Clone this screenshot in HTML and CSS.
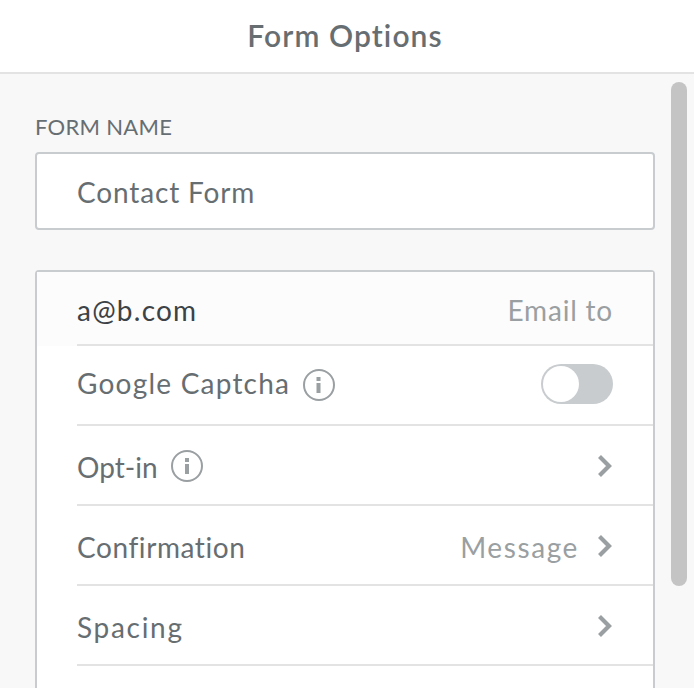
FILE: index.html
```html
<!DOCTYPE html>
<html>
	<head>
		<meta charset="UTF-8">
		<title>Form Options</title>
		<link rel="stylesheet" href="styles.css">
	</head>
	<body>
		<div class="panel">
			<div class="header"><h1>Form Options</h1></div>
			<div class="content">
				<div class="label"><span>FORM NAME</span></div>
				<div class="field"><span>Contact Form</span></div>
				<ul class="list">
					<li class="email">
						<span class="name mail">a@b.com</span>
						<span class="value to">Email to</span>
					</li>
					<li class="captcha">
						<span class="name google">Google Captcha</span>
						<svg class="info" viewBox="0 0 32 32"><circle cx="16" cy="16" r="15"/><path d="M13.5 8h4v4h-4zM13.5 14h4v10h-4z"/></svg>
						<div class="toggle"><i></i></div>
					</li>
					<li>
						<span class="name optin">Opt-in</span>
						<svg class="info" viewBox="0 0 32 32"><circle cx="16" cy="16" r="15"/><path d="M14 8h4v4h-4zM14 14h4v10h-4z"/></svg>
						<svg class="arrow" viewBox="0 0 14 22"><path d="M1.5 1.5L11 11L1.5 20.5"/></svg>
					</li>
					<li>
						<span class="name confirm">Confirmation</span>
						<span class="value message">Message</span>
						<svg class="arrow" viewBox="0 0 14 22"><path d="M1.5 1.5L11 11L1.5 20.5"/></svg>
					</li>
					<li>
						<span class="name spacing">Spacing</span>
						<svg class="arrow" viewBox="0 0 14 22"><path d="M1.5 1.5L11 11L1.5 20.5"/></svg>
					</li>
					<li></li>
				</ul>
			</div>
			<div class="scrollbar"></div>
		</div>
	</body>
</html>
```
FILE: styles.css
```css
*{
	padding:0;
	margin:0;
	box-sizing: border-box;
}
ul,li{
	list-style: none;
}
body{
	font-family: Lato, "Liberation Sans", sans-serif;
	font-size:28px;
	line-height:34px;
	color:#676e72;
	background: #f8f8f8;
	overflow: hidden;
}
.panel{
	height:688px;
	overflow: hidden;
	position: relative;
}
.header{
	height:74px;
	padding:18px 4px 0 0;
	background: #fff;
	border-bottom:2px solid #e3e3e3;
	text-align: center;
}
.header h1{
	font-size:30px;
	line-height:34px;
	font-weight:600;
	letter-spacing:1.1px;
}
.content{
	padding:39px 39px 0 35px;
}
.label{
	height:39px;
	font-size:22px;
	line-height:28px;
	letter-spacing:.3px;
}
.field{
	height:78px;
	padding:21px 40px 0;
	background: #fff;
	border:2px solid #c8cccf;
	border-radius:4px;
}
.field span{
	letter-spacing:.85px;
}
.list{
	margin-top:40px;
	background: #fff;
	border:2px solid #c8cccf;
	border-radius:4px;
}
.list li{
	display: flex;
	align-items: flex-start;
	height:80px;
	margin-left:40px;
	padding:24px 40px 0 0;
	border-bottom:2px solid #e3e3e3;
}
.list .email{
	height:74px;
	padding-top:21px;
	background: #fcfcfc;
	box-shadow: -40px 0 #fcfcfc;
}
.list .captcha{
	padding-top:20px;
}
.mail{
	color:#3c4246;
	letter-spacing:1.25px;
}
.google{
	letter-spacing:1.22px;
}
.optin{
	letter-spacing:.05px;
}
.confirm{
	letter-spacing:.58px;
}
.spacing{
	letter-spacing:1.7px;
}
.value{
	margin-left:auto;
	color:#9a9fa2;
}
.to{
	letter-spacing:.8px;
}
.message{
	margin-right:-1px;
	letter-spacing:1.6px;
}
.info{
	width:32px;
	height:32px;
	margin-left:13px;
	fill:#9a9fa2;
}
.captcha .info{
	margin-top:3px;
}
.info circle{
	fill:none;
	stroke:#9a9fa2;
	stroke-width:2;
}
.arrow{
	width:14px;
	height:22px;
	margin:5px 1px 0 auto;
	fill:none;
	stroke:#9a9fa2;
	stroke-width:4.2;
}
.value + .arrow{
	margin-left:20px;
}
.toggle{
	width:72px;
	height:40px;
	margin:-2px 0 0 auto;
	padding:2px;
	background: #c8cccf;
	border-radius:20px;
}
.toggle i{
	display: block;
	width:36px;
	height:36px;
	background: #fff;
	border-radius:50%;
}
.scrollbar{
	position: absolute;
	top:82px;
	right:7px;
	width:16px;
	height:504px;
	background: #c4c4c4;
	border-radius:8px;
}
```
